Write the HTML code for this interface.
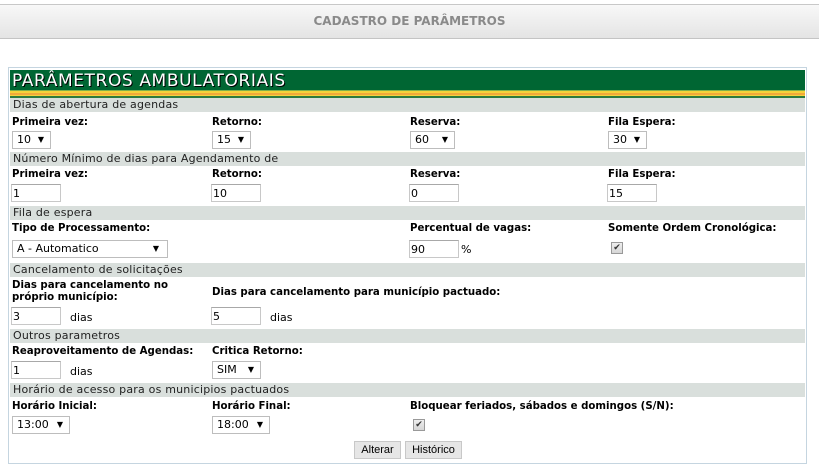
<!DOCTYPE html>
<html><head><meta charset="utf-8"><style>
*{margin:0;padding:0;box-sizing:border-box}
body{width:819px;height:472px;background:#fff;font-family:"DejaVu Sans","Liberation Sans",sans-serif;font-size:11px;color:#000;position:relative;overflow:hidden}
.a{position:absolute;white-space:nowrap}
.hdr{position:absolute;left:0;top:4px;width:819px;height:35px;background:linear-gradient(#f8f8f8,#e4e4e4);border-top:1px solid #c8c8c8;border-bottom:1px solid #c4c4c4;text-align:center;line-height:33px;color:#8a8a8a;font-size:12px;font-weight:bold;font-family:"DejaVu Sans",sans-serif}
.panel{position:absolute;left:8px;top:67px;width:799px;height:397px;border:1px solid #c5d5e0}
.title{position:absolute;left:10px;top:70px;width:795px;height:20px;background:#006633;color:#fff;font-size:17px;letter-spacing:0.6px;line-height:23px;padding-left:2px;text-shadow:1px 1px 0 #000}
.stripe{position:absolute;left:10px;top:90px;width:795px;height:8px;background:linear-gradient(#7fb24a 0,#7fb24a 1px,#f6d23a 1px,#f6d23a 3px,#f2a93b 3px,#f2a93b 5px,#f6d23a 5px,#f6d23a 6px,#2f7a3c 6px)}
.sec{position:absolute;left:10px;width:795px;height:14px;background:#d9dfdc;padding-left:3px;line-height:14px;color:#222;letter-spacing:0.2px}
.lb{font-weight:bold;font-size:10.2px}
.sel{position:absolute;height:18px;border:1px solid #bdbdbd;background:#fff;padding-left:4px;line-height:16px}
.sel i{position:absolute;right:6px;top:0;font-style:normal;font-size:8px}
.inp{position:absolute;height:18px;border:1px solid #c8c8c8;border-top-color:#a8a8a8;background:#fff;padding-left:1px;line-height:17px;width:50px}
.cb{position:absolute;width:12px;height:12px;border:1px solid #999;background:linear-gradient(#eee,#d6d6d6);font-size:9px;line-height:10px;text-align:center;color:#333}
.btn{position:absolute;top:441px;height:18px;border:1px solid #c8c8c8;background:#e6e6e6;font-family:"Liberation Sans",sans-serif;font-size:11px;line-height:16px;text-align:center}
</style></head><body>
<div class="hdr">CADASTRO DE PARÂMETROS</div>
<div class="panel"></div>
<div class="title">PARÂMETROS AMBULATORIAIS</div>
<div class="stripe"></div>

<div class="sec" style="top:98px">Dias de abertura de agendas</div>
<div class="a lb" style="left:12px;top:117px">Primeira vez:</div>
<div class="a lb" style="left:212px;top:117px">Retorno:</div>
<div class="a lb" style="left:410px;top:117px">Reserva:</div>
<div class="a lb" style="left:608px;top:117px">Fila Espera:</div>
<div class="sel" style="left:12px;top:131px;width:39px">10<i>▼</i></div>
<div class="sel" style="left:212px;top:131px;width:39px">15<i>▼</i></div>
<div class="sel" style="left:410px;top:131px;width:45px">60<i>▼</i></div>
<div class="sel" style="left:608px;top:131px;width:39px">30<i>▼</i></div>

<div class="sec" style="top:152px">Número Mínimo de dias para Agendamento de</div>
<div class="a lb" style="left:12px;top:169px">Primeira vez:</div>
<div class="a lb" style="left:212px;top:169px">Retorno:</div>
<div class="a lb" style="left:410px;top:169px">Reserva:</div>
<div class="a lb" style="left:608px;top:169px">Fila Espera:</div>
<div class="inp" style="left:11px;top:184px">1</div>
<div class="inp" style="left:211px;top:184px">10</div>
<div class="inp" style="left:409px;top:184px">0</div>
<div class="inp" style="left:607px;top:184px">15</div>

<div class="sec" style="top:206px">Fila de espera</div>
<div class="a lb" style="left:12px;top:223px">Tipo de Processamento:</div>
<div class="a lb" style="left:410px;top:223px">Percentual de vagas:</div>
<div class="a lb" style="left:608px;top:223px">Somente Ordem Cronológica:</div>
<div class="sel" style="left:12px;top:240px;width:156px">A - Automatico<i style="right:8px">▼</i></div>
<div class="inp" style="left:409px;top:240px">90</div>
<div class="a" style="left:461px;top:243px">%</div>
<div class="cb" style="left:611px;top:242px">✔</div>

<div class="sec" style="top:263px">Cancelamento de solicitações</div>
<div class="a lb" style="left:12px;top:280px;line-height:12px">Dias para cancelamento no<br>próprio município:</div>
<div class="a lb" style="left:212px;top:287px">Dias para cancelamento para município pactuado:</div>
<div class="inp" style="left:11px;top:307px">3</div>
<div class="a" style="left:70px;top:311px">dias</div>
<div class="inp" style="left:211px;top:307px">5</div>
<div class="a" style="left:270px;top:311px">dias</div>

<div class="sec" style="top:329px">Outros parametros</div>
<div class="a lb" style="left:12px;top:346px">Reaproveitamento de Agendas:</div>
<div class="a lb" style="left:212px;top:346px">Critica Retorno:</div>
<div class="inp" style="left:11px;top:361px">1</div>
<div class="a" style="left:70px;top:365px">dias</div>
<div class="sel" style="left:212px;top:361px;width:49px">SIM<i>▼</i></div>

<div class="sec" style="top:383px">Horário de acesso para os municipios pactuados</div>
<div class="a lb" style="left:12px;top:401px">Horário Inicial:</div>
<div class="a lb" style="left:212px;top:401px">Horário Final:</div>
<div class="a lb" style="left:410px;top:401px">Bloquear feriados, sábados e domingos (S/N):</div>
<div class="sel" style="left:12px;top:416px;width:58px">13:00<i>▼</i></div>
<div class="sel" style="left:212px;top:416px;width:58px">18:00<i>▼</i></div>
<div class="cb" style="left:413px;top:419px">✔</div>

<div class="btn" style="left:354px;width:47px">Alterar</div>
<div class="btn" style="left:405px;width:57px">Histórico</div>
</body></html>
